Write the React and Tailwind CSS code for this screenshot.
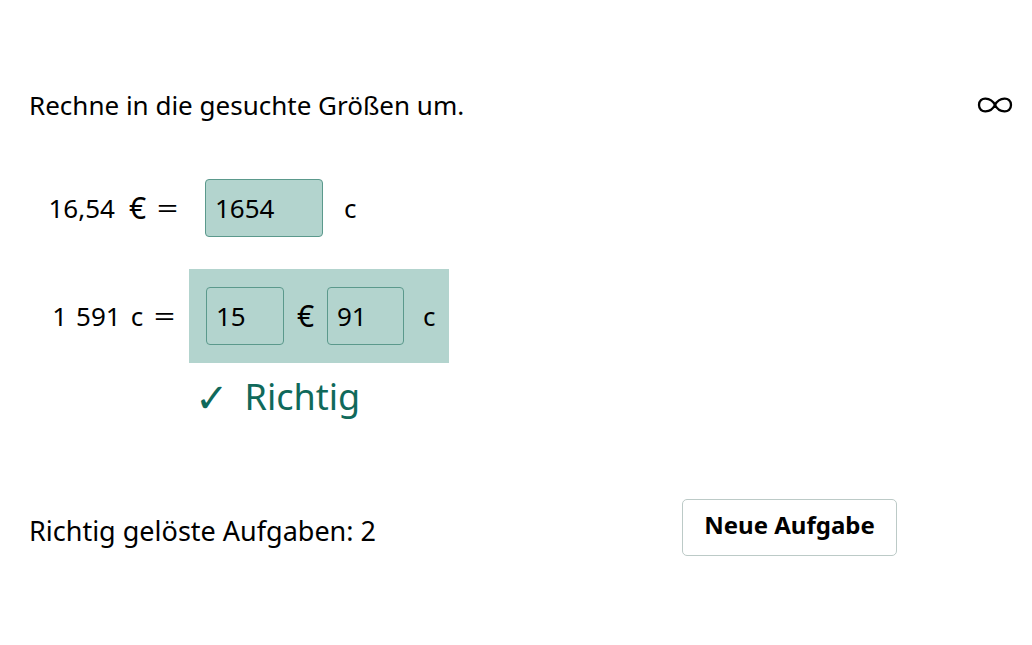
import React from 'react';

const FONT = { fontFamily: "'Noto Sans', 'DejaVu Sans', sans-serif" };

function Box({ value, className = '' }) {
  return (
    <div
      className={`flex items-center h-[58px] pl-[9px] rounded-[4px] border border-[#5b998c] bg-[#b3d4ce] text-[26px] text-black ${className}`}
    >
      {value}
    </div>
  );
}

function Eq() {
  return <span className="inline-block scale-x-[1.45] ml-[14px]">=</span>;
}

function Infinity() {
  return (
    <svg width="38" height="24" viewBox="0 0 38 24" fill="none" stroke="black" strokeWidth="2.3">
      <path d="M19 12 C15 4 3 3 3 12 C3 21 15 20 19 12 C23 4 35 3 35 12 C35 21 23 20 19 12 Z" />
    </svg>
  );
}

export default function App() {
  return (
    <div className="w-[1032px] h-[645px] bg-white text-black relative" style={FONT}>
      <div className="flex items-center justify-between pt-[86px] pl-[29px] pr-[18px] h-[124px]">
        <div className="text-[26px] leading-none">Rechne in die gesuchte Größen um.</div>
        <Infinity />
      </div>

      {/* row 1 */}
      <div className="flex items-center mt-[55px] h-[58px]">
        <div className="w-[189px] flex justify-end items-center pr-[14px] text-[26px]">
          <span>16,54</span>
          <span className="ml-[14px] text-[30px] leading-none">€</span>
          <Eq />
        </div>
        <Box value="1654" className="ml-[16px] w-[118px]" />
        <div className="ml-[21px] text-[26px]">c</div>
      </div>

      {/* row 2 */}
      <div className="flex items-center mt-[32px]">
        <div className="w-[189px] flex justify-end items-center pr-[17px] text-[26px]">
          <span>1</span>
          <span className="ml-[9px]">591</span>
          <span className="ml-[10px]">c</span>
          <Eq />
        </div>
        <div className="flex items-center w-[260px] h-[94px] bg-[#b3d4ce] pl-[17px]">
          <Box value="15" className="w-[78px]" />
          <div className="w-[43px] text-center text-[30px] leading-none">€</div>
          <Box value="91" className="w-[77px]" />
          <div className="ml-[19px] text-[26px]">c</div>
        </div>
      </div>

      <div className="flex items-center gap-[16px] pl-[195px] mt-[14px] text-[#10695b] text-[36px] leading-none">
        <span className="text-[40px]">✓</span>
        <span>Richtig</span>
      </div>

      <div className="flex items-center justify-between pl-[29px] mt-[82px] w-[897px]">
        <div className="text-[27px] mt-[7px]">Richtig gelöste Aufgaben: 2</div>
        <button className="w-[215px] h-[57px] rounded-[5px] border border-[#bccac7] bg-white text-[24px] font-bold pb-[5px]">
          Neue Aufgabe
        </button>
      </div>
    </div>
  );
}
